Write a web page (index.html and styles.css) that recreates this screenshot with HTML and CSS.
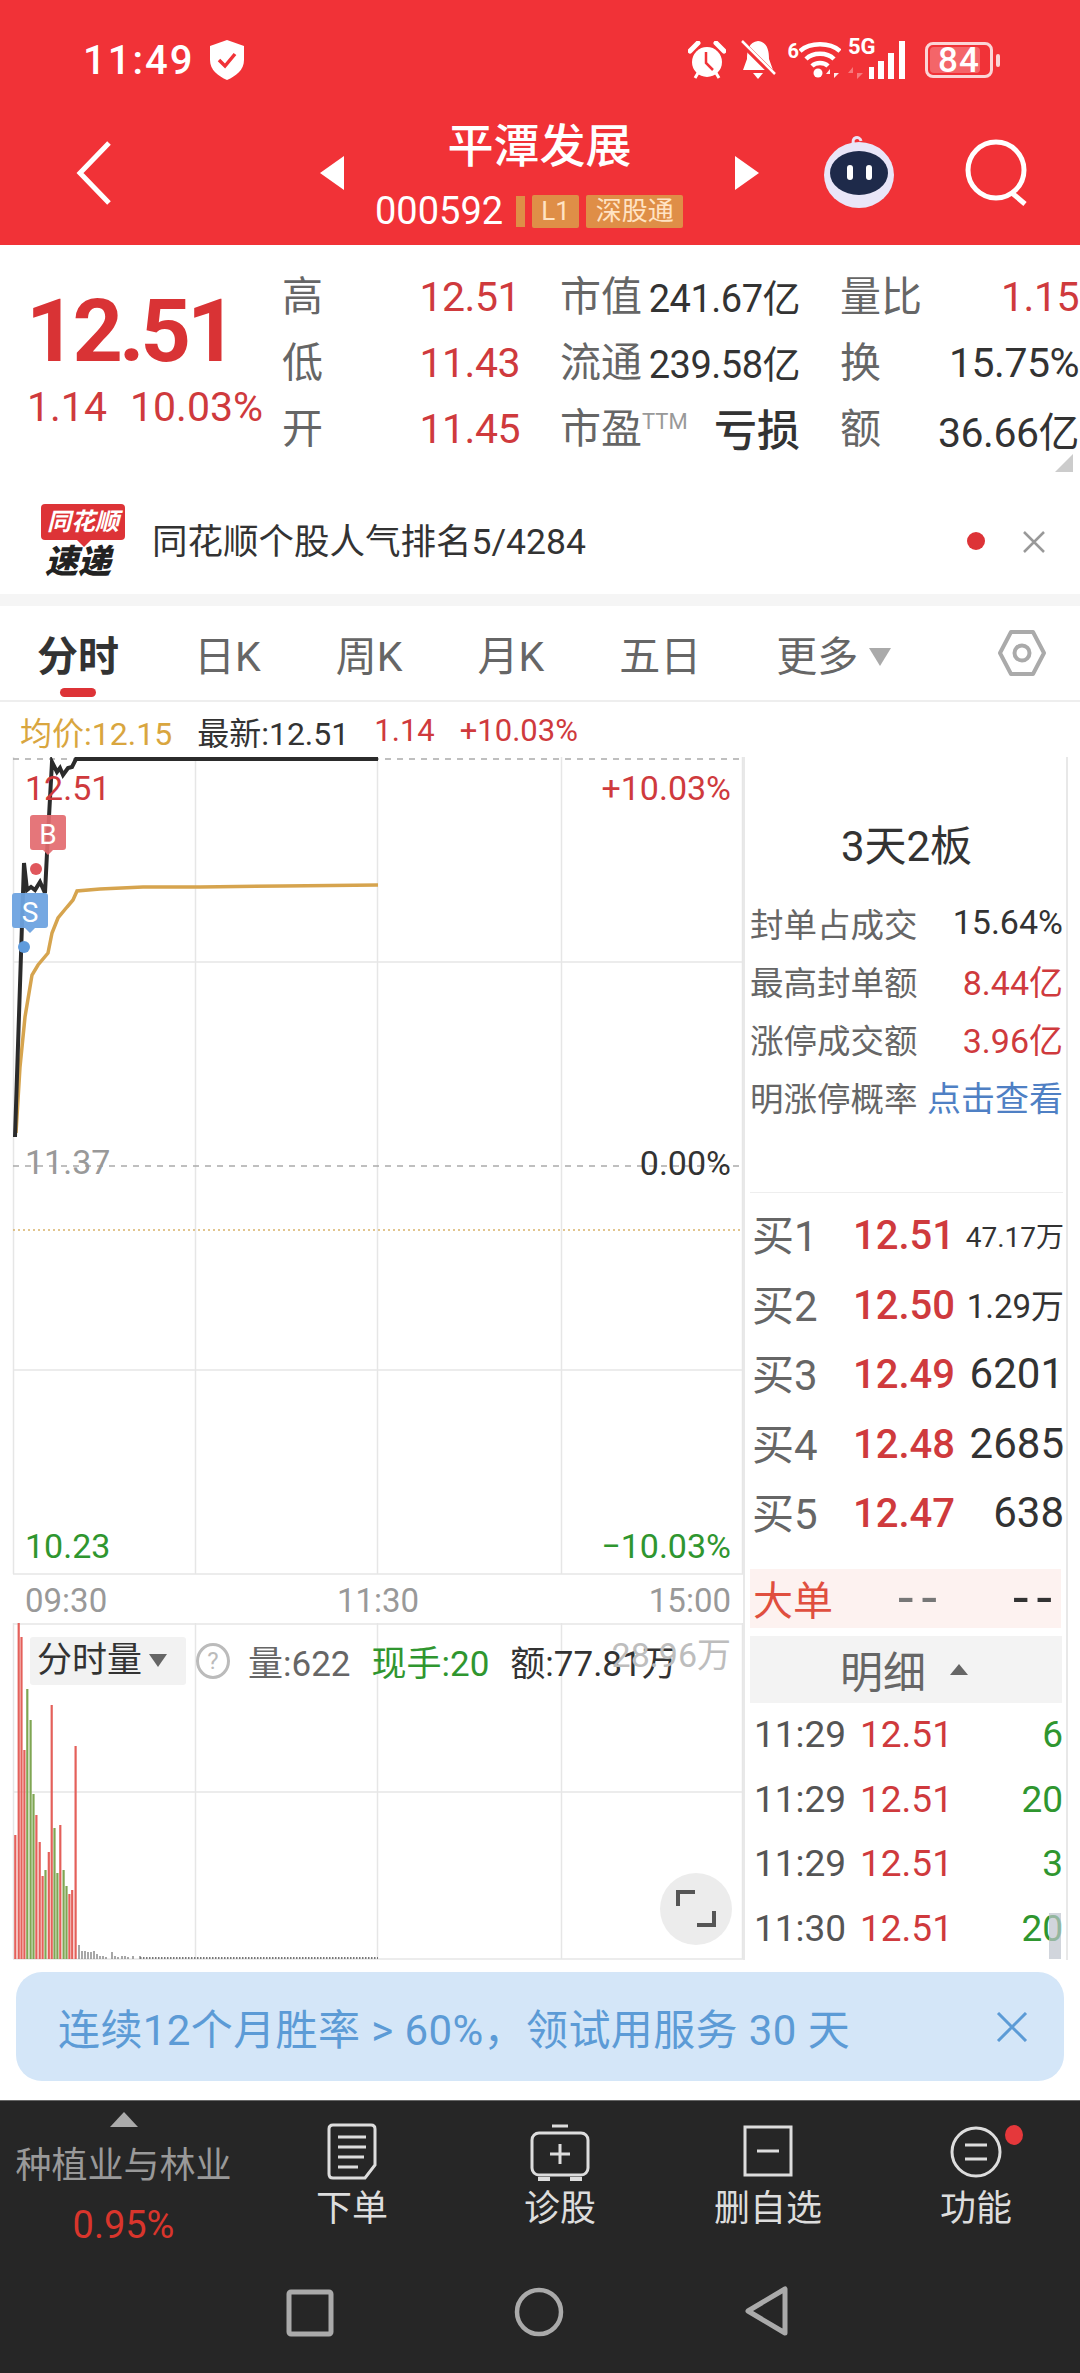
FILE: index.html
```html
<!DOCTYPE html>
<html lang="zh-CN">
<head>
    <meta charset="UTF-8">
    <meta name="viewport" content="width=device-width, initial-scale=1.0">
    <title>平潭发展 000592</title>
    <link rel="stylesheet" href="styles.css">
</head>
<body>
    <div class="page">
        <header class="top-bar">
            <div class="status-bar">
                <span class="clock">11:49</span>
                <svg class="shield" width="38" height="40" viewBox="0 0 38 40">
                    <path d="M19 0 L36 6 V20 C36 30 28 36 19 40 C10 36 2 30 2 20 V6 Z" fill="#fff"/>
                    <path d="M11 20 L17 26 L27 14" fill="none" stroke="#f13237" stroke-width="3.5"/>
                </svg>
                <div class="status-icons">
                    <svg width="38" height="38" viewBox="0 0 38 38">
                        <circle cx="19" cy="21" r="15" fill="#fff"/>
                        <path d="M2 10 L10 2 M36 10 L28 2" stroke="#fff" stroke-width="5" stroke-linecap="round"/>
                        <path d="M7 37 L10 32 M31 37 L28 32" stroke="#fff" stroke-width="3"/>
                        <path d="M18 11 V22 L25 29" fill="none" stroke="#f13237" stroke-width="2.5"/>
                    </svg>
                    <svg class="bell" width="36" height="42" viewBox="0 0 36 42">
                        <path d="M18 2 C27 3 29 11 29 20 L33 31 H3 L7 20 C7 11 9 3 18 2 Z" fill="#fff"/>
                        <path d="M13 34 H23 L18 40 Z" fill="#fff"/>
                        <path d="M1 3 L35 37" stroke="#f13237" stroke-width="6"/>
                        <path d="M2 2 L35 35" stroke="#fff" stroke-width="2.5"/>
                    </svg>
                    <span class="wifi">
                        <span class="wifi-six">6</span>
                        <svg width="42" height="38" viewBox="0 0 42 38">
                            <path d="M1 10 C11 1 31 1 41 10 M7 18 C14 11 28 11 35 18 M13 25 C17 21 25 21 29 25" fill="none" stroke="#fff" stroke-width="4.5"/>
                            <circle cx="19" cy="32" r="4.5" fill="#fff"/>
                            <path d="M31 28 L27 33 H31 V37 Z M35 37 L40 32 H35 V27 Z" fill="#fff" opacity=".9"/>
                        </svg>
                    </span>
                    <span class="signal">
                        <span class="five-g">5G</span>
                        <svg width="64" height="38" viewBox="0 0 64 38">
                            <rect x="22" y="26" width="5" height="12" fill="#fff"/>
                            <rect x="31" y="20" width="6" height="18" fill="#fff"/>
                            <rect x="41" y="12" width="6" height="26" fill="#fff"/>
                            <rect x="52" y="0" width="6" height="38" fill="#fff"/>
                            <path d="M6 26 L1 32 H6 V38 Z M10 38 L16 32 H10 V26 Z" fill="#fff" opacity=".35"/>
                        </svg>
                    </span>
                    <span class="battery"><span class="battery-fill"></span><span class="battery-num">84</span></span>
                    <span class="battery-tip"></span>
                </div>
            </div>
            <div class="stock-nav">
                <svg class="back" width="36" height="66" viewBox="0 0 36 66">
                    <path d="M33 3 L4 33 L33 63" fill="none" stroke="#fff" stroke-width="5"/>
                </svg>
                <span class="tri tri-left"></span>
                <div class="stock-center">
                    <div class="stock-name">平潭发展</div>
                    <div class="stock-code-row">
                        <span class="stock-code">000592</span>
                        <span class="tag-bar"></span>
                        <span class="tag tag-l1">L1</span>
                        <span class="tag tag-sgt">深股通</span>
                    </div>
                </div>
                <span class="tri tri-right"></span>
                <svg class="robot" width="76" height="76" viewBox="0 0 76 76">
                    <path d="M32 10 C28 2 38 0 39 6" fill="none" stroke="#e9e4f6" stroke-width="3"/>
                    <ellipse cx="37" cy="40" rx="35" ry="33" fill="#e9e6f8"/>
                    <ellipse cx="37" cy="38" rx="29" ry="22" fill="#1e2a4a"/>
                    <rect x="25" y="30" width="6" height="15" rx="3" fill="#fff"/>
                    <rect x="44" y="30" width="6" height="15" rx="3" fill="#fff"/>
                </svg>
                <svg class="search" width="66" height="68" viewBox="0 0 66 68">
                    <circle cx="31" cy="31" r="28" fill="none" stroke="#fff" stroke-width="5"/>
                    <path d="M47 54 L60 65" stroke="#fff" stroke-width="5"/>
                </svg>
            </div>
        </header>

        <section class="quote">
            <div class="last">
                <div class="last-price">12.51</div>
                <div class="last-change"><span>1.14</span><span>10.03%</span></div>
            </div>
            <div class="quote-grid">
                <div class="q-cell"><span class="q-label">高</span><span class="q-num up">12.51</span></div>
                <div class="q-cell"><span class="q-label">市值</span><span class="q-small">241.67亿</span></div>
                <div class="q-cell"><span class="q-label">量比</span><span class="q-num up">1.15</span></div>
                <div class="q-cell"><span class="q-label">低</span><span class="q-num up">11.43</span></div>
                <div class="q-cell"><span class="q-label">流通</span><span class="q-small">239.58亿</span></div>
                <div class="q-cell"><span class="q-label">换</span><span class="q-num">15.75%</span></div>
                <div class="q-cell"><span class="q-label">开</span><span class="q-num up">11.45</span></div>
                <div class="q-cell"><span class="q-label">市盈<sup class="ttm">TTM</sup></span><span class="q-loss">亏损</span></div>
                <div class="q-cell"><span class="q-label">额</span><span class="q-num">36.66亿</span></div>
            </div>
            <span class="corner-mark"></span>
        </section>

        <section class="notice">
            <div class="logo">
                <div class="logo-top">同花顺</div>
                <div class="logo-bottom">速递</div>
            </div>
            <div class="notice-text">同花顺个股人气排名5/4284</div>
            <span class="notice-dot"></span>
            <svg class="notice-close" width="24" height="24" viewBox="0 0 24 24">
                <path d="M2 2 L22 22 M22 2 L2 22" stroke="#999" stroke-width="2.5"/>
            </svg>
        </section>

        <nav class="tabs">
            <span class="tab active">分时</span>
            <span class="tab">日K</span>
            <span class="tab">周K</span>
            <span class="tab">月K</span>
            <span class="tab">五日</span>
            <span class="tab">更多<i class="tab-caret"></i></span>
            <svg class="tab-settings" width="50" height="48" viewBox="0 0 50 48">
                <path d="M14 3 H36 L47 24 L36 45 H14 L3 24 Z" fill="none" stroke="#aaa" stroke-width="4" stroke-linejoin="round"/>
                <circle cx="25" cy="24" r="7.5" fill="none" stroke="#aaa" stroke-width="4"/>
            </svg>
        </nav>

        <div class="price-info">
            <span class="avg">均价:12.15</span>
            <span class="latest">最新:12.51</span>
            <span class="info-up">1.14</span>
            <span class="info-up">+10.03%</span>
        </div>

        <div class="chart-area">
            <div class="chart-col">
                <div class="price-chart">
                    <svg width="743" height="818" viewBox="0 757 743 818">
                        <g stroke="#e6e6e6" stroke-width="1.5">
                            <path d="M13.5 757 V1574 M195.5 757 V1574 M377.5 757 V1574 M561.5 757 V1574 M742.5 757 V1574"/>
                            <path d="M13 962 H743 M13 1370 H743 M13 1574 H743"/>
                        </g>
                        <path d="M13 759 H743 M13 1166 H743" stroke="#aaa" stroke-width="1.5" stroke-dasharray="6 6"/>
                        <path d="M13 1230 H743" stroke="#d9b36a" stroke-width="1.5" stroke-dasharray="2 3"/>
                        <polyline points="16,1133 20,1067 25,1017 32,975 38,965 48,953 52,933 58,918 67,907 73,900 77,891 100,889 143,887 200,887 283,886 378,885" fill="none" stroke="#d6a44e" stroke-width="3.5"/>
                        <polyline points="15,1137 24,863 27,890 31,887 35,890 40,882 45,893 47,853 52,762 57,772 60,768 63,775 68,768 72,767 76,759 378,759" fill="none" stroke="#2b2b2b" stroke-width="4"/>
                        <circle cx="36" cy="869" r="6" fill="#e0575c"/>
                        <circle cx="24" cy="947" r="6" fill="#5f9bdc"/>
                        <path d="M33 815 H63 Q66 815 66 818 V847 Q66 850 63 850 H53 L48 855 L43 850 H33 Q30 850 30 847 V818 Q30 815 33 815 Z" fill="#e36a6f" fill-opacity=".92"/>
                        <path d="M15 893 H45 Q48 893 48 896 V925 Q48 928 45 928 H35 L30 933 L25 928 H15 Q12 928 12 925 V896 Q12 893 15 893 Z" fill="#6ea3e0" fill-opacity=".95"/>
                        <text x="48" y="844" class="mark-letter">B</text>
                        <text x="30" y="922" class="mark-letter">S</text>
                    </svg>
                    <span class="chart-label up label-top-left">12.51</span>
                    <span class="chart-label up label-top-right">+10.03%</span>
                    <span class="chart-label muted label-mid-left">11.37</span>
                    <span class="chart-label dark label-mid-right">0.00%</span>
                    <span class="chart-label down label-bot-left">10.23</span>
                    <span class="chart-label down label-bot-right">−10.03%</span>
                </div>

                <div class="time-axis"><span>09:30</span><span>11:30</span><span>15:00</span></div>

                <div class="volume-chart">
                    <svg width="743" height="338" viewBox="0 0 743 338">
                        <g stroke="#e6e6e6" stroke-width="1.5">
                            <path d="M13.5 0 V336 M195.5 0 V336 M377.5 0 V336 M561.5 0 V336 M742.5 0 V336"/>
                            <path d="M13 1 H743 M13 169 H743 M13 336 H743"/>
                        </g>
                        <!-- 成交量柱 -->
                        <path d="M15.3 336 V212 M18.7 336 V0 M21.5 336 V14 M24.4 336 V127 M36.4 336 V192 M39.7 336 V219 M42.6 336 V253 M48.8 336 V229 M51.7 336 V82 M60.3 336 V202 M69.4 336 V271 M72.2 336 V267 M75.6 336 V123" stroke="#e4605a" stroke-width="2.2"/>
                        <path d="M27.3 336 V66 M30.6 336 V97 M33.5 336 V171 M45.5 336 V247 M54.5 336 V205 M57.4 336 V250 M63.6 336 V247 M66.5 336 V263" stroke="#7fa653" stroke-width="2.2"/>
                        <path d="M79 336 V322 M82 336 V328 M85 336 V328 M88 336 V329 M91 336 V329 M94 336 V328 M97 336 V331 M100 336 V333 M103 336 V333 M106 336 V334 M112 336 V329 M115 336 V333 M118 336 V334 M122 336 V333 M125 336 V333 M128 336 V334 M133 336 V333 M140 336 V333" stroke="#8a8a8a" stroke-width="1.5"/>
                        <path d="M140 335 H378" stroke="#777" stroke-width="2" stroke-dasharray="1.5 1.5"/>
                    </svg>
                    <div class="volume-head">
                        <span class="volume-select">分时量<i class="select-caret"></i></span>
                        <span class="help-icon">?</span>
                        <span class="vol-item">量:622</span>
                        <span class="vol-item down">现手:20</span>
                        <span class="vol-item dark">额:77.81万</span>
                    </div>
                    <span class="volume-max">28.96万</span>
                    <span class="expand-btn">
                        <svg width="40" height="38" viewBox="0 0 40 38">
                            <path d="M2 16 V2 H19 M38 21 V35 H21" fill="none" stroke="#555" stroke-width="4"/>
                        </svg>
                    </span>
                </div>
            </div>

            <aside class="side">
                <div class="board">
                    <div class="board-title">3天2板</div>
                    <div class="board-row"><span>封单占成交</span><b class="dark">15.64%</b></div>
                    <div class="board-row"><span>最高封单额</span><b class="up">8.44亿</b></div>
                    <div class="board-row"><span>涨停成交额</span><b class="up">3.96亿</b></div>
                    <div class="board-row"><span>明涨停概率</span><b class="link">点击查看</b></div>
                </div>
                <div class="book">
                    <div class="book-row"><span class="book-name">买1</span><span class="book-price">12.51</span><span class="book-qty qty-xs">47.17万</span></div>
                    <div class="book-row"><span class="book-name">买2</span><span class="book-price">12.50</span><span class="book-qty qty-sm">1.29万</span></div>
                    <div class="book-row"><span class="book-name">买3</span><span class="book-price">12.49</span><span class="book-qty">6201</span></div>
                    <div class="book-row"><span class="book-name">买4</span><span class="book-price">12.48</span><span class="book-qty">2685</span></div>
                    <div class="book-row"><span class="book-name">买5</span><span class="book-price">12.47</span><span class="book-qty">638</span></div>
                </div>
                <div class="big-order"><span class="big-name">大单</span><span class="big-dash">--</span><span class="big-dash dark">--</span></div>
                <div class="detail-head">明细<i class="detail-caret"></i></div>
                <div class="ticks">
                    <div class="tick"><span class="tick-time">11:29</span><span class="tick-price">12.51</span><span class="tick-qty">6</span></div>
                    <div class="tick"><span class="tick-time">11:29</span><span class="tick-price">12.51</span><span class="tick-qty">20</span></div>
                    <div class="tick"><span class="tick-time">11:29</span><span class="tick-price">12.51</span><span class="tick-qty">3</span></div>
                    <div class="tick"><span class="tick-time">11:30</span><span class="tick-price">12.51</span><span class="tick-qty">20</span></div>
                    <span class="scroll-thumb"></span>
                </div>
            </aside>
        </div>

        <div class="promo">
            <span class="promo-text">连续12个月胜率 &gt; 60%，领试用服务 30 天</span>
            <svg width="32" height="30" viewBox="0 0 32 30">
                <path d="M2 1 L30 29 M30 1 L2 29" stroke="#5c9bd6" stroke-width="3"/>
            </svg>
        </div>

        <footer class="bottom">
            <div class="toolbar">
                <div class="sector">
                    <span class="sector-arrow"></span>
                    <span class="sector-name">种植业与林业</span>
                    <span class="sector-pct">0.95%</span>
                </div>
                <div class="tool">
                    <svg width="52" height="58" viewBox="0 0 52 58">
                        <path d="M7 2 H45 Q49 2 49 6 V42 L39 55 H7 Q3 55 3 51 V6 Q3 2 7 2 Z" fill="none" stroke="#ddd" stroke-width="3"/>
                        <path d="M12 14 H40 M12 24 H40 M12 34 H38 M12 44 H32" stroke="#ddd" stroke-width="3"/>
                    </svg>
                    <span>下单</span>
                </div>
                <div class="tool">
                    <svg width="60" height="58" viewBox="0 0 60 58">
                        <path d="M22 3 H38" stroke="#ddd" stroke-width="3"/>
                        <rect x="2" y="10" width="56" height="42" rx="7" fill="none" stroke="#ddd" stroke-width="3"/>
                        <path d="M30 21 V41 M20 31 H40" stroke="#ddd" stroke-width="3"/>
                        <path d="M8 56 H20 M40 56 H52" stroke="#ddd" stroke-width="4"/>
                    </svg>
                    <span>诊股</span>
                </div>
                <div class="tool">
                    <svg width="52" height="58" viewBox="0 0 52 58">
                        <rect x="3" y="4" width="46" height="48" fill="none" stroke="#ddd" stroke-width="3"/>
                        <path d="M15 28 H37" stroke="#ddd" stroke-width="3"/>
                    </svg>
                    <span>删自选</span>
                </div>
                <div class="tool">
                    <svg width="52" height="58" viewBox="0 0 52 58">
                        <circle cx="26" cy="29" r="24" fill="none" stroke="#ddd" stroke-width="3"/>
                        <path d="M15 22 H37 M15 36 H37" stroke="#ddd" stroke-width="3"/>
                    </svg>
                    <span>功能</span>
                    <i class="tool-dot"></i>
                </div>
            </div>
            <div class="sys-nav">
                <svg width="48" height="48" viewBox="0 0 48 48">
                    <rect x="3" y="3" width="42" height="42" rx="2" fill="none" stroke="#aaa" stroke-width="5"/>
                </svg>
                <svg width="50" height="50" viewBox="0 0 50 50">
                    <circle cx="25" cy="25" r="22" fill="none" stroke="#aaa" stroke-width="4.5"/>
                </svg>
                <svg width="46" height="52" viewBox="0 0 46 52">
                    <path d="M41 4 V48 L4 26 Z" fill="none" stroke="#aaa" stroke-width="5" stroke-linejoin="round"/>
                </svg>
            </div>
        </footer>
    </div>
</body>
</html>
```

FILE: styles.css
```css
* {
    margin: 0;
    padding: 0;
    box-sizing: border-box;
}

body {
    font-family: Roboto, "Noto Sans CJK SC", sans-serif;
    background: #fff;
    color: #333;
}

i {
    font-style: normal;
}

.page {
    width: 1080px;
    height: 2373px;
    overflow: hidden;
}

.up { color: #cf3a3d; }
.down { color: #2f962f; }
.dark { color: #333; }
.muted { color: #999; }
.link { color: #4f80c4; }

/* 顶部红色区域 */
.top-bar {
    height: 245px;
    background: #f13237;
    color: #fff;
}

.status-bar {
    height: 100px;
    padding: 20px 0 0 83px;
    display: flex;
    align-items: center;
}

.clock {
    font-size: 40px;
    font-weight: 500;
    letter-spacing: 2px;
}

.shield {
    margin-left: 14px;
}

.status-icons {
    margin-left: auto;
    margin-right: 80px;
    display: flex;
    align-items: center;
}

.bell {
    margin-left: 14px;
}

.wifi {
    margin-left: 12px;
    display: flex;
    align-items: flex-start;
}

.wifi-six {
    font-size: 20px;
    font-weight: 700;
    line-height: 20px;
    margin-right: 0;
}

.signal {
    margin-left: 6px;
    position: relative;
    display: block;
    height: 38px;
}

.five-g {
    position: absolute;
    left: 1px;
    top: -7px;
    font-size: 22px;
    font-weight: 700;
}

.battery {
    margin-left: 14px;
    width: 68px;
    height: 36px;
    border: 3px solid #fbd5d6;
    border-radius: 8px;
    position: relative;
    display: flex;
    align-items: center;
    justify-content: center;
}

.battery-fill {
    position: absolute;
    left: 2px;
    top: 2px;
    bottom: 2px;
    width: 50px;
    border-radius: 4px;
    background: rgba(255, 255, 255, 0.25);
}

.battery-num {
    position: relative;
    font-size: 35px;
    font-weight: 500;
    letter-spacing: 1px;
}

.battery-tip {
    margin-left: 3px;
    width: 4px;
    height: 13px;
    border-radius: 2px;
    background: #fbd5d6;
}

.stock-nav {
    height: 145px;
    padding-left: 76px;
    display: flex;
    align-items: center;
}

.tri {
    width: 0;
    height: 0;
    border-top: 17px solid transparent;
    border-bottom: 17px solid transparent;
}

.tri-left {
    margin-left: 208px;
    border-right: 24px solid #fff;
}

.tri-right {
    border-left: 24px solid #fff;
}

.stock-center {
    width: 391px;
    align-self: flex-start;
    margin-top: 20px;
}

.stock-name {
    font-size: 46px;
    font-weight: 500;
    line-height: 52px;
    text-align: center;
}

.stock-code-row {
    margin-top: 18px;
    padding-left: 31px;
    height: 42px;
    display: flex;
    align-items: center;
}

.stock-code {
    font-size: 38px;
}

.tag-bar {
    margin-left: 13px;
    width: 9px;
    height: 31px;
    background: #df8e47;
}

.tag {
    margin-left: 7px;
    height: 33px;
    background: #df8e47;
    color: #ffe3c4;
    font-size: 26px;
    line-height: 33px;
    text-align: center;
    border-radius: 2px;
}

.tag-l1 {
    width: 47px;
}

.tag-sgt {
    width: 97px;
}

.robot {
    margin-left: 63px;
}

.search {
    margin-left: 67px;
}

/* 行情报价 */
.quote {
    height: 245px;
    display: flex;
    position: relative;
}

.last {
    width: 282px;
    padding-left: 26px;
    color: #cf3a3d;
}

.last-price {
    margin-top: 37px;
    font-size: 88px;
    font-weight: 700;
    line-height: 98px;
    letter-spacing: -4px;
    color: #d93335;
}

.last-change {
    margin: 5px 0 0 1px;
    width: 236px;
    display: flex;
    justify-content: space-between;
    font-size: 41px;
    line-height: 44px;
}

.quote-grid {
    margin-top: 17px;
    display: grid;
    grid-template-columns: 238px 240px 239px;
    grid-auto-rows: 66px;
    column-gap: 40px;
    height: 198px;
}

.q-cell {
    display: flex;
    align-items: center;
    justify-content: space-between;
    white-space: nowrap;
}

.q-label {
    margin-bottom: 4px;
    font-size: 41px;
    color: #666;
}

.q-num {
    margin-top: 4px;
    font-size: 41px;
    letter-spacing: -0.5px;
    color: #333;
}

.q-num.up {
    color: #cf3a3d;
}

.q-small {
    font-size: 38px;
    letter-spacing: -0.5px;
    color: #333;
}

.q-loss {
    font-size: 43px;
    font-weight: 500;
    color: #333;
}

.ttm {
    font-size: 22px;
    color: #999;
    vertical-align: 14px;
    line-height: 0;
}

.corner-mark {
    position: absolute;
    right: 7px;
    bottom: 18px;
    width: 0;
    height: 0;
    border-left: 18px solid transparent;
    border-bottom: 18px solid #ccc;
}

/* 速递 */
.notice {
    height: 116px;
    padding-left: 37px;
    border-bottom: 12px solid #f5f5f5;
    display: flex;
    align-items: center;
    position: relative;
}

.logo {
    width: 90px;
}

.logo-top {
    width: 84px;
    height: 36px;
    margin-left: 4px;
    background: #dd3337;
    border-radius: 4px;
    color: #fff;
    font-size: 24px;
    font-weight: 700;
    font-style: italic;
    line-height: 36px;
    text-align: center;
    position: relative;
}

.logo-top::after {
    content: "";
    position: absolute;
    left: 36px;
    top: 36px;
    border-left: 7px solid transparent;
    border-right: 7px solid transparent;
    border-top: 7px solid #dd3337;
}

.logo-bottom {
    margin-top: 3px;
    padding-left: 8px;
    font-size: 33px;
    font-weight: 900;
    font-style: italic;
    line-height: 37px;
    color: #222;
}

.notice-text {
    margin: 0 0 8px 25px;
    font-size: 35.5px;
    color: #333;
}

.notice-dot {
    margin: 0 0 2px auto;
    width: 18px;
    height: 18px;
    border-radius: 50%;
    background: #dd3337;
}

.notice-close {
    margin: 0 34px 0 37px;
}

/* 周期切换 */
.tabs {
    height: 96px;
    padding: 0 33px 0 37px;
    border-bottom: 2px solid #eee;
    display: flex;
    gap: 75px;
    align-items: center;
    position: relative;
}

.tab {
    font-size: 41px;
    color: #666;
    white-space: nowrap;
    position: relative;
}

.tab.active {
    font-weight: 700;
    color: #333;
}

.tab.active::after {
    content: "";
    position: absolute;
    left: 23px;
    bottom: -14px;
    width: 36px;
    height: 9px;
    border-radius: 5px;
    background: #dd3337;
}

.tab-caret {
    display: inline-block;
    margin-left: 11px;
    vertical-align: 5px;
    border-left: 11px solid transparent;
    border-right: 11px solid transparent;
    border-top: 18px solid #aaa;
}

.tab-settings {
    margin-left: auto;
}

.price-info {
    height: 55px;
    padding: 2px 0 0 20px;
    display: flex;
    gap: 25px;
    align-items: center;
    font-size: 31px;
    white-space: nowrap;
}

.avg {
    font-size: 32px;
    color: #d9a63f;
}

.latest {
    font-size: 32px;
    color: #333;
}

.info-up {
    color: #cf3a3d;
}

/* 分时图 */
.chart-area {
    height: 1205px;
    display: flex;
}

.chart-col {
    width: 743px;
}

.price-chart {
    height: 818px;
    position: relative;
}

.price-chart svg,
.volume-chart svg {
    display: block;
}

.mark-letter {
    font-family: Roboto, sans-serif;
    font-size: 28px;
    fill: #fff;
    text-anchor: middle;
}

.chart-label {
    position: absolute;
    font-size: 34px;
    line-height: 38px;
    white-space: nowrap;
}

.label-top-left { left: 25px; top: 12px; }
.label-top-right { right: 12px; top: 12px; }
.label-mid-left { left: 25px; top: 386px; }
.label-mid-right { right: 12px; top: 387px; }
.label-bot-left { left: 25px; top: 770px; }
.label-bot-right { right: 12px; top: 770px; }

.time-axis {
    height: 48px;
    padding: 2px 12px 0 25px;
    display: flex;
    justify-content: space-between;
    align-items: center;
    font-size: 33px;
    color: #999;
}

.volume-chart {
    height: 339px;
    position: relative;
}

.volume-head {
    position: absolute;
    left: 30px;
    top: 12px;
    display: flex;
    align-items: center;
    white-space: nowrap;
}

.volume-select {
    width: 156px;
    height: 48px;
    padding-left: 7px;
    background: #f2f2f2;
    border-radius: 3px;
    font-size: 35px;
    line-height: 48px;
    color: #333;
}

.select-caret {
    display: inline-block;
    margin-left: 7px;
    vertical-align: 5px;
    border-left: 9px solid transparent;
    border-right: 9px solid transparent;
    border-top: 13px solid #666;
}

.help-icon {
    margin: 0 18px 0 10px;
    width: 34px;
    height: 36px;
    border: 3px solid #bbb;
    border-radius: 50%;
    font-size: 24px;
    line-height: 30px;
    text-align: center;
    color: #bbb;
}

.vol-item {
    margin-right: 21px;
    font-size: 35px;
    color: #666;
}

.vol-item.down { color: #2f962f; }
.vol-item.dark { color: #333; }

.volume-max {
    position: absolute;
    right: 12px;
    top: 5px;
    font-size: 34px;
    color: #bdbdbd;
}

.expand-btn {
    position: absolute;
    left: 660px;
    top: 250px;
    width: 72px;
    height: 72px;
    border-radius: 50%;
    background: #ececec;
    display: flex;
    align-items: center;
    justify-content: center;
}

/* 右侧盘口 */
.side {
    width: 325px;
    height: 1203px;
    border-left: 2px solid #e8e8e8;
    border-right: 2px solid #e8e8e8;
    padding-left: 5px;
}

.board {
    height: 436px;
    padding-top: 65px;
    margin-right: 3px;
    border-bottom: 1px solid #eee;
}

.board-title {
    font-size: 42px;
    line-height: 50px;
    margin-bottom: 21px;
    text-align: center;
    color: #333;
}

.board-row {
    height: 58px;
    display: flex;
    justify-content: space-between;
    align-items: center;
    font-size: 33.5px;
    color: #666;
}

.board-row b {
    font-weight: 400;
    font-size: 34px;
}

.board-row .link {
    font-size: 34px;
    color: #4f80c4;
}

.book {
    padding-top: 6px;
    margin-right: 2px;
}

.book-row {
    height: 69.5px;
    display: flex;
    align-items: center;
    white-space: nowrap;
}

.book-name {
    width: 103px;
    padding-left: 2px;
    margin-bottom: 2px;
    font-size: 42px;
    color: #666;
}

.book-price {
    margin-top: 4px;
    font-size: 40px;
    font-weight: 500;
    color: #cf3a3d;
}

.book-qty {
    margin-left: auto;
    margin-top: 2px;
    font-size: 42px;
    color: #333;
}

.qty-xs {
    font-size: 28px;
}

.qty-sm {
    font-size: 33px;
}

.big-order {
    margin: 22px 5px 0 0;
    height: 59px;
    padding: 0 1px 0 3px;
    background: #fdf2f0;
    display: flex;
    align-items: center;
}

.big-name {
    width: 145px;
    font-size: 40px;
    color: #e04f3f;
}

.big-dash {
    width: 80px;
    font-size: 56px;
    line-height: 59px;
    letter-spacing: 8px;
    color: #777;
}

.big-dash.dark {
    margin-left: auto;
    width: auto;
    color: #333;
}

.detail-head {
    margin: 8px 4px 0 0;
    height: 67px;
    background: #f3f3f3;
    display: flex;
    align-items: center;
    justify-content: center;
    font-size: 43px;
    color: #666;
    padding-right: 4px;
}

.detail-caret {
    margin-left: 24px;
    border-left: 9px solid transparent;
    border-right: 9px solid transparent;
    border-bottom: 11px solid #666;
}

.ticks {
    margin-right: 3px;
    position: relative;
}

.tick {
    height: 64.5px;
    display: flex;
    align-items: center;
    padding-left: 4px;
    font-size: 37px;
    white-space: nowrap;
}

.tick-time {
    width: 106px;
    color: #555;
}

.tick-price {
    color: #cf3a3d;
}

.tick-qty {
    margin-left: auto;
    color: #2f962f;
}

.scroll-thumb {
    position: absolute;
    right: 2px;
    bottom: 2px;
    width: 12px;
    height: 46px;
    background: rgba(190, 195, 205, 0.7);
}

/* 提示条 */
.promo {
    margin: 10px 16px 0;
    height: 109px;
    padding: 0 36px 0 42px;
    background: #d4e6f8;
    border-radius: 26px;
    display: flex;
    align-items: center;
    justify-content: space-between;
    color: #5c9bd6;
}

.promo-text {
    font-size: 42px;
    letter-spacing: 0.4px;
    white-space: nowrap;
}

/* 底部工具栏 */
.bottom {
    margin-top: 19px;
    height: 273px;
    background: #262626;
    border-top: 1px solid #666;
}

.toolbar {
    height: 165px;
    padding-left: 16px;
    display: flex;
}

.sector {
    width: 215px;
    margin-right: 17px;
    display: flex;
    flex-direction: column;
    align-items: center;
    white-space: nowrap;
}

.sector-arrow {
    margin-top: 11px;
    border-left: 14px solid transparent;
    border-right: 14px solid transparent;
    border-bottom: 15px solid #aaa;
}

.sector-name {
    margin-top: 16px;
    font-size: 36px;
    line-height: 46px;
    color: #999;
}

.sector-pct {
    margin-top: 14px;
    font-size: 38px;
    line-height: 44px;
    color: #d9352c;
}

.tool {
    width: 208px;
    padding-top: 22px;
    display: flex;
    flex-direction: column;
    align-items: center;
    gap: 4px;
    font-size: 36px;
    line-height: 48px;
    color: #ddd;
    position: relative;
    white-space: nowrap;
}

.tool-dot {
    position: absolute;
    left: 133px;
    top: 24px;
    width: 18px;
    height: 20px;
    border-radius: 50%;
    background: #e5383b;
}

.sys-nav {
    height: 107px;
    padding: 0 290px 36px 286px;
    display: flex;
    align-items: flex-end;
    justify-content: space-between;
}
```
